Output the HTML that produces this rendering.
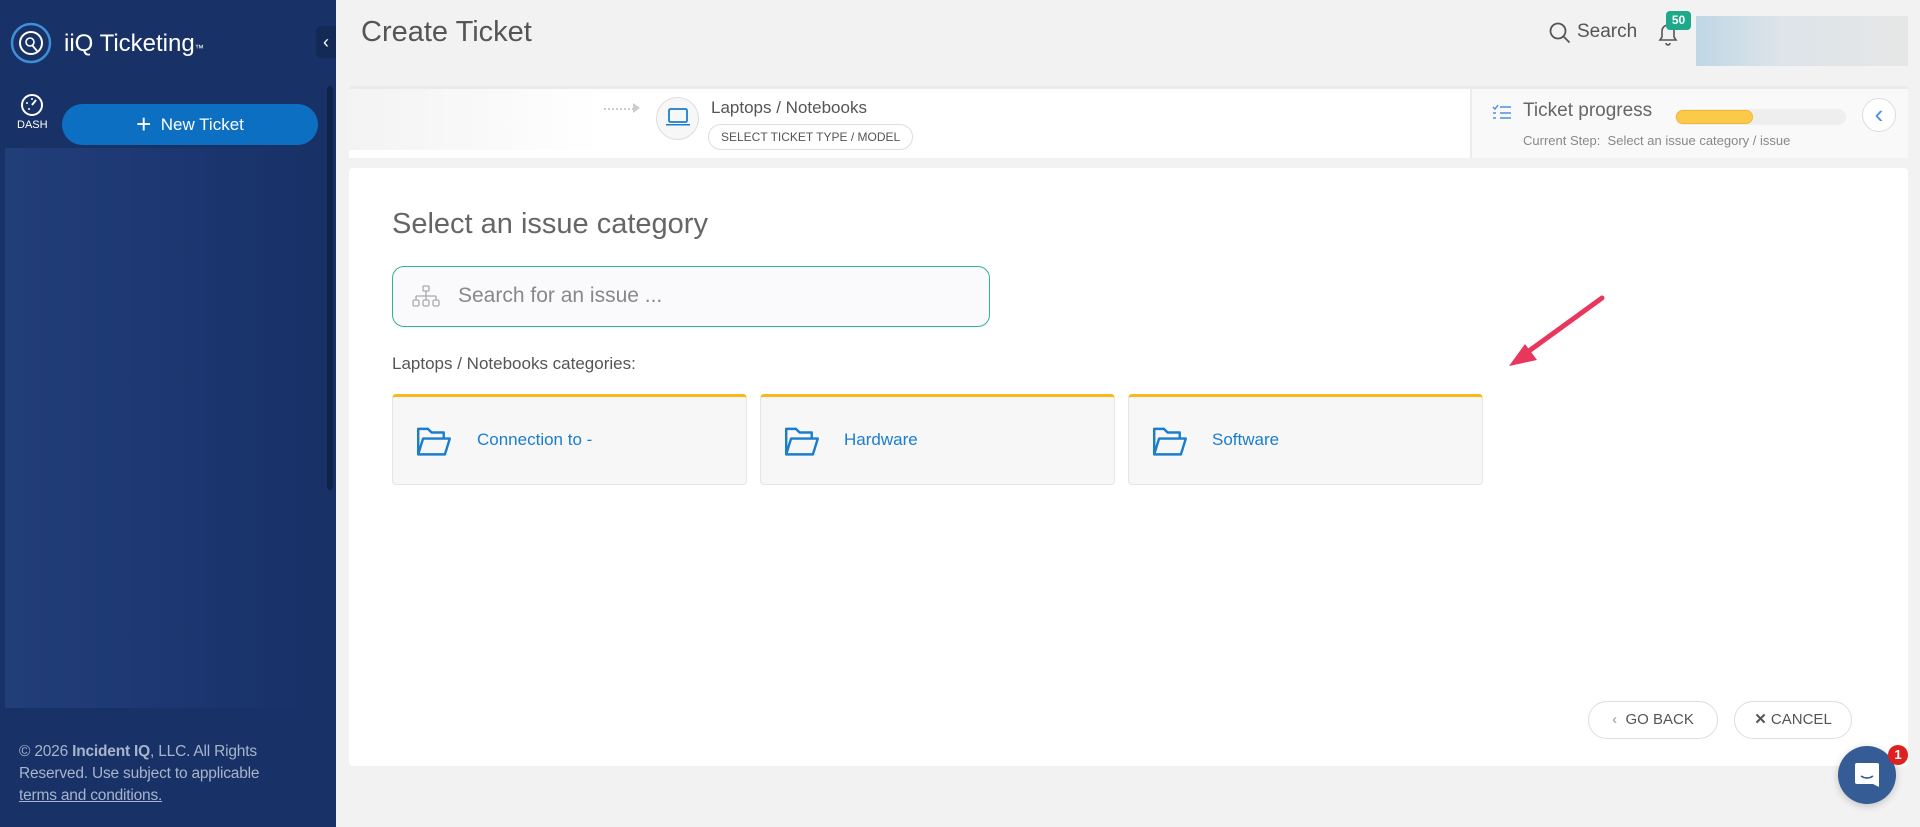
<!DOCTYPE html>
<html><head><meta charset="utf-8"><style>
*{box-sizing:border-box;margin:0;padding:0}
body{width:1920px;height:827px;overflow:hidden;background:#f2f2f2;font-family:"Liberation Sans",sans-serif;position:relative;color:#555}
.abs{position:absolute}
#side{left:0;top:0;width:336px;height:827px;background:#183166}
</style></head><body>
<div id="side" class="abs">
  <div class="abs" style="left:5px;top:148px;width:320px;height:560px;background:linear-gradient(90deg,#223e78,#1b3670 60%,#183166)"></div>
  <svg class="abs" style="left:10px;top:22px" width="42" height="42" viewBox="0 0 42 42"><circle cx="21" cy="21" r="19" fill="none" stroke="#3f8fd6" stroke-width="2.5"/><circle cx="21" cy="21" r="11" fill="none" stroke="#fff" stroke-width="2"/><circle cx="20" cy="20" r="4" fill="none" stroke="#fff" stroke-width="1.6"/><path d="M22 23l5 6" stroke="#fff" stroke-width="1.8"/></svg>
  <div class="abs" style="left:64px;top:30px;color:#fff;font-size:24px">iiQ Ticketing<span style="font-size:9px">™</span></div>
  <div class="abs" style="left:316px;top:26px;width:20px;height:32px;background:#132a57;border-radius:6px 0 0 6px;color:#fff;font-size:18px;line-height:32px;text-align:center">‹</div>
  <div class="abs" style="left:327px;top:86px;width:6px;height:404px;background:#0f2248;border-radius:3px"></div>
  <svg class="abs" style="left:20px;top:93px" width="24" height="24" viewBox="0 0 24 24"><circle cx="12" cy="12" r="10" fill="none" stroke="#fff" stroke-width="2"/><path d="M12 12l4-5" stroke="#fff" stroke-width="2"/><circle cx="7" cy="10" r="1" fill="#fff"/><circle cx="9" cy="16" r="1" fill="#fff"/><circle cx="12" cy="6" r="1" fill="#fff"/></svg>
  <div class="abs" style="left:17px;top:119px;color:#fff;font-size:11px">DASH</div>
  <div class="abs" style="left:62px;top:104px;width:256px;height:41px;background:#0d6fc2;border-radius:21px;color:#fff;font-size:17px;line-height:41px;text-align:center"><span style="font-size:26px;vertical-align:-3px">+</span>&nbsp; New Ticket</div>
  <div class="abs" style="left:19px;top:741px;width:268px;color:#a8b4cc;font-size:15.5px;line-height:22px;letter-spacing:-0.2px">© 2026 <b>Incident IQ</b>, LLC. All Rights Reserved. Use subject to applicable <u>terms and conditions.</u></div>
</div>
<div class="abs" style="left:361px;top:16px;font-size:29px;color:#555">Create Ticket</div>
<svg class="abs" style="left:1548px;top:21px" width="24" height="24" viewBox="0 0 24 24"><circle cx="10" cy="10" r="7.5" fill="none" stroke="#555" stroke-width="1.8"/><path d="M15.5 15.5l6 6" stroke="#555" stroke-width="1.8"/></svg>
<div class="abs" style="left:1577px;top:21px;font-size:19px;color:#555">Search</div>
<svg class="abs" style="left:1655px;top:20px" width="26" height="28" viewBox="0 0 26 28"><path d="M5 20h16l-2-3v-6a6 6 0 0 0-12 0v6z M11 23a2 2 0 0 0 4 0" fill="none" stroke="#555" stroke-width="1.6"/></svg>
<div class="abs" style="left:1666px;top:11px;width:25px;height:19px;background:#1ea98a;border-radius:4px;color:#fff;font-size:12px;font-weight:bold;text-align:center;line-height:19px">50</div>
<div class="abs" style="left:1696px;top:16px;width:212px;height:50px;background:linear-gradient(90deg,#bfd7e4,#dde4ea 40%,#e6e6e6)"></div>

<div class="abs" style="left:349px;top:86px;width:1559px;height:72px;background:#fff;border-top:3px solid #ebebeb"></div>
<div class="abs" style="left:349px;top:89px;width:253px;height:61px;background:linear-gradient(90deg,#f3f3f3,#fafafa 60%,#fff)"></div>
<div class="abs" style="left:604px;top:108px;width:30px;border-top:2px dotted #ccc"></div>
<div class="abs" style="left:633px;top:103px;width:0;height:0;border:5px solid transparent;border-left:7px solid #ccc"></div>
<div class="abs" style="left:656px;top:97px;width:43px;height:43px;border-radius:50%;border:1px solid #ddd;background:#f7f7f7"></div>
<svg class="abs" style="left:664px;top:106px" width="28" height="24" viewBox="0 0 28 24"><rect x="5" y="3" width="18" height="13" rx="1.5" fill="none" stroke="#1a7dd0" stroke-width="1.8"/><path d="M2 18h24v1.5H2z" fill="#1a7dd0"/></svg>
<div class="abs" style="left:711px;top:98px;font-size:17px;color:#555">Laptops / Notebooks</div>
<div class="abs" style="left:708px;top:124px;height:26px;padding:0 12px;border:1px solid #ddd;border-radius:13px;font-size:12px;line-height:24px;color:#555">SELECT TICKET TYPE / MODEL</div>
<div class="abs" style="left:1470px;top:89px;width:438px;height:69px;background:#f9f9f9;border-left:2px solid #ececec"></div>
<svg class="abs" style="left:1492px;top:104px" width="20" height="16" viewBox="0 0 20 16"><path d="M1 3l2 2 3-4M1 9h3M1 14h3M8 3h11M8 9h11M8 14h11" fill="none" stroke="#4a90e2" stroke-width="1.4"/></svg>
<div class="abs" style="left:1523px;top:100px;font-size:19px;color:#666">Ticket progress</div>
<div class="abs" style="left:1675px;top:109px;width:171px;height:16px;background:#eee;border-radius:8px"></div>
<div class="abs" style="left:1676px;top:110px;width:77px;height:14px;background:#fcc94b;border:1px solid #f0b830;border-radius:7px"></div>
<div class="abs" style="left:1523px;top:133px;font-size:13px;color:#888">Current Step:&nbsp; Select an issue category / issue</div>
<div class="abs" style="left:1862px;top:98px;width:34px;height:34px;border-radius:50%;border:1px solid #ddd;background:#fff;color:#4a90e2;font-size:26px;line-height:30px;text-align:center">‹</div>

<div class="abs" style="left:349px;top:168px;width:1559px;height:598px;background:#fff;border-radius:4px"></div>
<div class="abs" style="left:392px;top:208px;font-size:29px;color:#666">Select an issue category</div>
<div class="abs" style="left:392px;top:266px;width:598px;height:61px;border:1px solid #2fb496;border-radius:12px;background:#fafafc"></div>
<svg class="abs" style="left:411px;top:284px" width="30" height="26" viewBox="0 0 30 26"><g fill="none" stroke="#aaa" stroke-width="1.3"><rect x="12" y="2" width="6" height="5" rx="1"/><path d="M15 7v5M5 12h20M5 12v4M15 12v4M25 12v4"/><rect x="2" y="16" width="6" height="6" rx="1.5"/><rect x="12" y="16" width="6" height="6" rx="1.5"/><rect x="22" y="16" width="6" height="6" rx="1.5"/></g></svg>
<div class="abs" style="left:458px;top:284px;font-size:21px;color:#888">Search for an issue ...</div>
<div class="abs" style="left:392px;top:354px;font-size:17px;color:#555">Laptops / Notebooks categories:</div>
<div class="abs" style="left:392px;top:394px;width:355px;height:91px;background:#f7f7f7;border:1px solid #e4e4e4;border-top:3px solid #fbb81b;border-radius:4px"></div>
<div class="abs" style="left:760px;top:394px;width:355px;height:91px;background:#f7f7f7;border:1px solid #e4e4e4;border-top:3px solid #fbb81b;border-radius:4px"></div>
<div class="abs" style="left:1128px;top:394px;width:355px;height:91px;background:#f7f7f7;border:1px solid #e4e4e4;border-top:3px solid #fbb81b;border-radius:4px"></div>
<svg class="abs" style="left:415px;top:424px" width="38" height="34" viewBox="0 0 30 28"><path d="M2 25V4h8l3 3h10v5M2 25l4-13h22l-4 13z" fill="none" stroke="#1a7dd0" stroke-width="2" stroke-linejoin="round"/></svg>
<svg class="abs" style="left:783px;top:424px" width="38" height="34" viewBox="0 0 30 28"><path d="M2 25V4h8l3 3h10v5M2 25l4-13h22l-4 13z" fill="none" stroke="#1a7dd0" stroke-width="2" stroke-linejoin="round"/></svg>
<svg class="abs" style="left:1151px;top:424px" width="38" height="34" viewBox="0 0 30 28"><path d="M2 25V4h8l3 3h10v5M2 25l4-13h22l-4 13z" fill="none" stroke="#1a7dd0" stroke-width="2" stroke-linejoin="round"/></svg>
<div class="abs" style="left:477px;top:430px;font-size:17px;color:#1a7dd0">Connection to -</div>
<div class="abs" style="left:844px;top:430px;font-size:17px;color:#1a7dd0">Hardware</div>
<div class="abs" style="left:1212px;top:430px;font-size:17px;color:#1a7dd0">Software</div>
<svg class="abs" style="left:1500px;top:290px" width="120" height="90" viewBox="0 0 120 90"><path d="M102 8L22 66" stroke="#e8365d" stroke-width="5" stroke-linecap="round"/><path d="M9 76l28-6-12-16z" fill="#e8365d"/></svg>
<div class="abs" style="left:1588px;top:701px;width:130px;height:38px;border:1px solid #ddd;border-radius:19px;font-size:15px;line-height:36px;text-align:center;color:#555"><span style="color:#999">‹</span>&nbsp; GO BACK</div>
<div class="abs" style="left:1734px;top:701px;width:118px;height:38px;border:1px solid #ddd;border-radius:19px;font-size:15px;line-height:36px;text-align:center;color:#555"><b>✕</b> CANCEL</div>
<div class="abs" style="left:1838px;top:746px;width:58px;height:58px;border-radius:50%;background:#365c96;box-shadow:0 2px 8px rgba(0,0,0,.2)"></div>
<svg class="abs" style="left:1853px;top:761px" width="28" height="30" viewBox="0 0 28 30"><path d="M4 2h20a2 2 0 0 1 2 2v22l-6-3H4a2 2 0 0 1-2-2V4a2 2 0 0 1 2-2z" fill="#fff"/><path d="M8 15q6 4 12 0" fill="none" stroke="#365c96" stroke-width="1.6"/></svg>
<div class="abs" style="left:1888px;top:745px;width:20px;height:20px;border-radius:50%;background:#e02020;color:#fff;font-size:13px;font-weight:bold;text-align:center;line-height:20px">1</div>
</body></html>
